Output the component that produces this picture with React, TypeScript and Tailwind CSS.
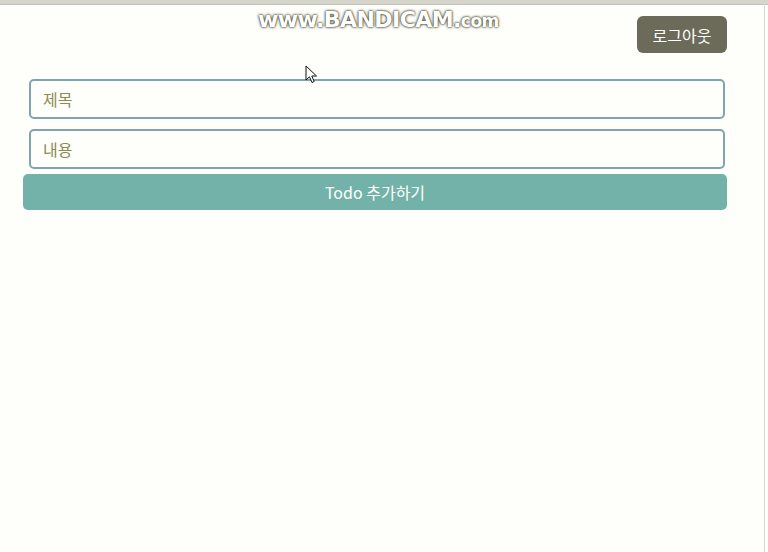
export default function App() {
    return (
        <div className="relative min-h-[552px] bg-[#fefefa] font-['Noto_Sans_CJK_KR','Noto_Sans',sans-serif] overflow-hidden">
            <div className="h-[5px] bg-[#d6d5cc] border-b border-[#c4c3b8]" />

            <div className="absolute top-0 right-[3px] h-full w-px bg-[#d8d8d0]" />

            <div className="absolute top-[3px] left-[258px] text-[22px] font-bold tracking-tight text-white font-['DejaVu_Sans',sans-serif] [text-shadow:0_0_3px_#3a3a20,0_0_2px_#3a3a20]">
                www.BANDICAM.<span className="text-[17px]">com</span>
            </div>

            <svg className="absolute left-[305px] top-[65px]" width="14" height="20" viewBox="0 0 14 20">
                <path d="M1 1 L1 15 L4.5 11.8 L7 17.5 L9.2 16.5 L6.8 11 L11.5 11 Z" fill="#fff" stroke="#111" strokeWidth="1" strokeLinejoin="round" />
            </svg>

            <div className="flex justify-end pr-[41px] pt-[11px]">
                <button className="h-[37px] w-[90px] rounded-md bg-[#6c6b5a] text-[16px] text-white">
                    로그아웃
                </button>
            </div>

            <form className="flex flex-col pl-[23px] pr-[41px] pt-[26px]">
                <input
                    placeholder="제목"
                    className="ml-[6px] mr-[2px] h-[40px] rounded-[5px] border-2 border-[#7ea5ae] bg-[#fefefa] px-3 text-[16px] placeholder:text-[#8c8a55] outline-none"
                />
                <input
                    placeholder="내용"
                    className="ml-[6px] mr-[2px] mt-[10px] h-[40px] rounded-[5px] border-2 border-[#7ea5ae] bg-[#fefefa] px-3 text-[16px] placeholder:text-[#8c8a55] outline-none"
                />
                <button
                    type="button"
                    className="mt-[5px] h-[36px] rounded-[5px] bg-[#73b2a8] text-[16px] text-white"
                >
                    Todo 추가하기
                </button>
            </form>
        </div>
    );
}
